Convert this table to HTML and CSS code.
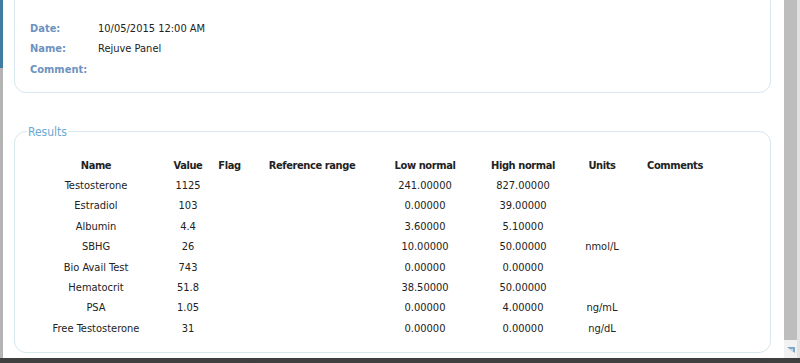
FILE: index.html
```html
<!DOCTYPE html>
<html>
<head>
<meta charset="utf-8">
<link rel="stylesheet" href="styles.css">
</head>
<body>
<div class="screen">
  <div class="edge"><div class="edge-top"></div><div class="edge-bottom"></div></div>
  <div class="dialog">
    <div class="content">
      <fieldset class="box detail">
        <div class="info">
          <div class="lbl">Date:</div><div class="val">10/05/2015 12:00 AM</div>
          <div class="lbl">Name:</div><div class="val">Rejuve Panel</div>
          <div class="lbl">Comment:</div><div class="val"></div>
        </div>
      </fieldset>
      <fieldset class="box results">
        <legend>Results</legend>
        <table class="grid">
          <colgroup>
            <col class="c1"><col class="c2"><col class="c3"><col class="c4"><col class="c5"><col class="c6"><col class="c7"><col class="c8">
          </colgroup>
          <thead>
            <tr><th>Name</th><th>Value</th><th>Flag</th><th>Reference range</th><th>Low normal</th><th>High normal</th><th>Units</th><th>Comments</th></tr>
          </thead>
          <tbody>
            <tr><td>Testosterone</td><td>1125</td><td></td><td></td><td>241.00000</td><td>827.00000</td><td></td><td></td></tr>
            <tr><td>Estradiol</td><td>103</td><td></td><td></td><td>0.00000</td><td>39.00000</td><td></td><td></td></tr>
            <tr><td>Albumin</td><td>4.4</td><td></td><td></td><td>3.60000</td><td>5.10000</td><td></td><td></td></tr>
            <tr><td>SBHG</td><td>26</td><td></td><td></td><td>10.00000</td><td>50.00000</td><td>nmol/L</td><td></td></tr>
            <tr><td>Bio Avail Test</td><td>743</td><td></td><td></td><td>0.00000</td><td>0.00000</td><td></td><td></td></tr>
            <tr><td>Hematocrit</td><td>51.8</td><td></td><td></td><td>38.50000</td><td>50.00000</td><td></td><td></td></tr>
            <tr><td>PSA</td><td>1.05</td><td></td><td></td><td>0.00000</td><td>4.00000</td><td>ng/mL</td><td></td></tr>
            <tr><td>Free Testosterone</td><td>31</td><td></td><td></td><td>0.00000</td><td>0.00000</td><td>ng/dL</td><td></td></tr>
          </tbody>
        </table>
      </fieldset>
    </div>
    <div class="scrollbar">
      <div class="track"></div>
      <div class="grip">
        <svg width="10" height="10" viewBox="0 0 10 10"><path d="M1 3 L9 3 L9 9 Z" fill="#7fa6c4"/><path d="M3 5 L7 5 L7 8 Z" fill="#c9dbe8"/></svg>
      </div>
    </div>
    <div class="outer"></div>
  </div>
</div>
</body>
</html>
```

FILE: styles.css
```css
html, body {
  margin: 0;
  padding: 0;
  background: #4d4d4d;
}
.screen {
  display: flex;
  width: 800px;
  height: 363px;
  overflow: hidden;
  background: linear-gradient(#6a6a6a, #3f3f3f);
  font-family: "DejaVu Sans Condensed", "DejaVu Sans", sans-serif;
  font-size: 11px;
  color: #222;
}
.edge {
  width: 3px;
  display: flex;
  flex-direction: column;
  height: 358px;
}
.edge-top { height: 68px; background: #3f7ca4; }
.edge-bottom { flex: 1; background: #b4b4b4; }
.dialog {
  flex: 1;
  height: 358px;
  display: flex;
  background: #fff;
  overflow: hidden;
}
.content {
  flex: 1;
  padding-left: 11px;
  padding-right: 13px;
  min-width: 0;
}
.box {
  border: 1px solid #d6e7ee;
  border-radius: 12px;
  margin: 0;
}
.detail {
  margin-top: -10px;
  padding: 27px 0 12px 15px;
}
.info {
  display: grid;
  grid-template-columns: 68px auto;
  grid-auto-rows: 20.5px;
  align-items: center;
}
.lbl {
  color: #6e92c0;
  font-weight: bold;
}
.val { color: #222; }
.results {
  margin-top: 32px;
  padding: 0 0 13px 0;
}
.results legend {
  margin-left: 12px;
  padding: 0 1px;
  font-size: 12px;
  line-height: 14px;
  color: #6aaad3;
}
.grid {
  border-collapse: collapse;
  table-layout: fixed;
  width: 691px;
  margin: 17px 0 0 15px;
}
.grid th, .grid td {
  padding: 0;
  text-align: center;
  line-height: 20.4px;
  height: 20.4px;
  white-space: nowrap;
}
.grid th { font-weight: bold; color: #222; letter-spacing: -0.4px; }
.c1 { width: 132px; }
.c2 { width: 52px; }
.c3 { width: 31px; }
.c4 { width: 134px; }
.c5 { width: 92px; }
.c6 { width: 104px; }
.c7 { width: 54px; }
.c8 { width: 92px; }
.scrollbar {
  width: 13px;
  display: flex;
  flex-direction: column;
}
.track { flex: 1; background: #bdbdbd; }
.grip {
  height: 18px;
  background: #f2f2f2;
  display: flex;
  align-items: center;
  justify-content: center;
}
.outer {
  width: 3px;
  background: #e2e2e2;
}
```
